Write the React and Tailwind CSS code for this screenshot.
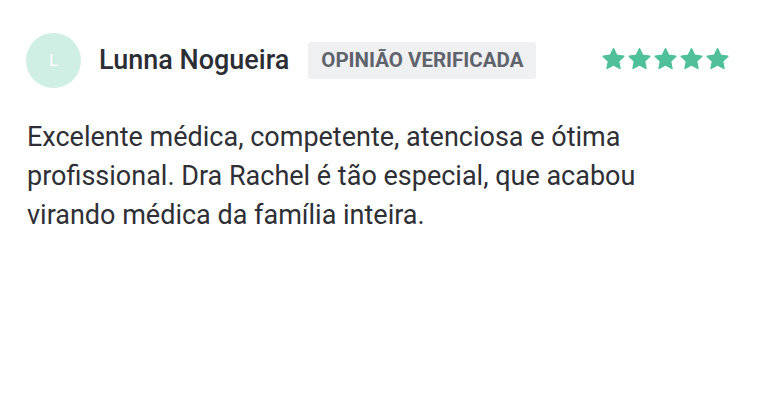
import React from "react";

const Star = () => (
  <svg width="25" height="24" viewBox="0 0 24 24" className="block">
    <path
      d="M12 1.8l3.1 6.6 7.1.9-5.2 4.9 1.4 7.1L12 17.8l-6.4 3.5 1.4-7.1-5.2-4.9 7.1-.9z"
      fill="#4fc09a"
      stroke="#4fc09a"
      strokeWidth="1.6"
      strokeLinejoin="round"
    />
  </svg>
);

export default function App() {
  return (
    <div
      className="w-[758px] h-[400px] bg-white"
      style={{ fontFamily: "Roboto, 'Liberation Sans', sans-serif" }}
    >
      <div className="pt-[33px] pl-[26px] pr-[28px]">
        <div className="flex items-center">
          <div className="w-[55px] h-[55px] rounded-full bg-[#cfeee4] flex items-center justify-center text-white text-[17px]">
            L
          </div>
          <div className="ml-[18px] text-[27px] font-medium text-[#2b2e34] leading-none">
            Lunna Nogueira
          </div>
          <div className="ml-[19px] h-[37px] px-[13px] bg-[#eef0f2] rounded-[3px] flex items-center text-[20.5px] font-bold text-[#5f636c]">
            OPINIÃO VERIFICADA
          </div>
          <div className="ml-auto flex gap-[1px] -mt-[4px]">
            <Star />
            <Star />
            <Star />
            <Star />
            <Star />
          </div>
        </div>
        <p className="mt-[30px] pl-[1px] text-[27px] leading-[39px] text-[#2e3035] w-[660px]">
          Excelente médica, competente, atenciosa e ótima profissional. Dra
          Rachel é tão especial, que acabou virando médica da família inteira.
        </p>
      </div>
    </div>
  );
}
